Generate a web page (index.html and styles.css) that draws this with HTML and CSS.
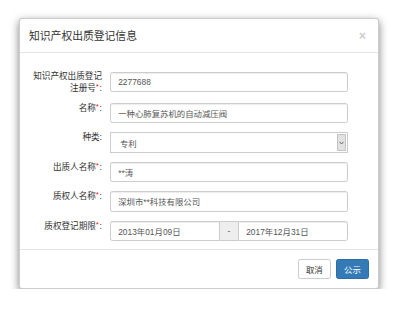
FILE: index.html
```html
<!DOCTYPE html>
<html lang="zh-CN">
<head>
    <meta charset="UTF-8">
    <meta name="viewport" content="width=device-width, initial-scale=1.0">
    <title>知识产权出质登记信息</title>
    <link rel="stylesheet" href="styles.css">
</head>
<body>
    <div class="modal">
        <div class="modal-header">
            <h4 class="modal-title">知识产权出质登记信息</h4>
            <span class="close">&times;</span>
        </div>

        <div class="modal-body">
            <div class="form-row tall">
                <label class="form-label">知识产权出质登记注册号<em>*</em>:</label>
                <div class="field">
                    <input class="input" type="text" value="2277688">
                </div>
            </div>
            <div class="form-row">
                <label class="form-label">名称<em>*</em>:</label>
                <div class="field">
                    <input class="input" type="text" value="一种心肺复苏机的自动减压阀">
                </div>
            </div>
            <div class="form-row">
                <label class="form-label">种类:</label>
                <div class="field">
                    <div class="input select">
                        <span class="select-text">专利</span>
                        <span class="select-arrow">
                            <svg width="5" height="4" viewBox="0 0 5 4"><path d="M0.5 0.8 L2.5 3 L4.5 0.8" fill="none" stroke="#666" stroke-width="1"/></svg>
                        </span>
                    </div>
                </div>
            </div>
            <div class="form-row">
                <label class="form-label">出质人名称<em>*</em>:</label>
                <div class="field">
                    <input class="input" type="text" value="**涛">
                </div>
            </div>
            <div class="form-row">
                <label class="form-label">质权人名称<em>*</em>:</label>
                <div class="field">
                    <input class="input" type="text" value="深圳市**科技有限公司">
                </div>
            </div>
            <div class="form-row">
                <label class="form-label">质权登记期限<em>*</em>:</label>
                <div class="field input-group">
                    <input class="input first" type="text" value="2013年01月09日">
                    <span class="addon">-</span>
                    <input class="input last" type="text" value="2017年12月31日">
                </div>
            </div>
        </div>

        <div class="modal-footer">
            <button class="btn">取消</button>
            <button class="btn btn-primary">公示</button>
        </div>
    </div>
</body>
</html>
```

FILE: styles.css
```css
body {
    margin: 0;
    background-color: #fff;
    font-family: "Liberation Sans", "Noto Sans CJK SC", sans-serif;
    color: #333;
}
.modal {
    width: 358px;
    margin: 18px 0 0 19px;
    background-color: #fff;
    border: 1px solid rgba(0, 0, 0, 0.2);
    border-radius: 3px;
    box-shadow: 0 3px 9px rgba(0, 0, 0, 0.5);
}
.modal-header {
    display: flex;
    justify-content: space-between;
    align-items: center;
    padding: 9px 9px 8px 9px;
    border-bottom: 1px solid #e5e5e5;
}
.modal-title {
    margin: 0;
    font-size: 10.8px;
    line-height: 16px;
    font-weight: normal;
    color: #333;
}
.close {
    font-size: 12.6px;
    font-weight: bold;
    line-height: 1;
    color: #000;
    opacity: 0.2;
    margin-right: 3px;
}
.modal-body {
    padding: 17px 9px 8px 9px;
}
.form-row {
    display: flex;
    align-items: flex-start;
    margin-bottom: 9px;
}
.form-row:last-child {
    margin-bottom: 0;
}
.form-row.tall {
    align-items: center;
}
.form-label {
    flex: none;
    width: 73px;
    margin-right: 8px;
    margin-top: -1px;
    text-align: right;
    font-size: 8.6px;
    line-height: 12px;
    font-weight: normal;
    color: #333;
}
.form-row.tall .form-label {
    margin-top: 0;
}
.form-label em {
    font-style: normal;
    font-size: 7px;
    vertical-align: top;
    line-height: 10px;
    margin-right: 1px;
    color: #e00;
}
.field {
    width: 238px;
}
.input {
    display: block;
    width: 100%;
    height: 20.4px;
    box-sizing: border-box;
    margin: 0;
    padding: 0 7.2px;
    border: 1px solid #ccc;
    border-radius: 2.4px;
    background-color: #fff;
    box-shadow: inset 0 1px 1px rgba(0, 0, 0, 0.075);
    font-family: "Liberation Sans", "Noto Sans CJK SC", sans-serif;
    font-size: 8.4px;
    color: #555;
    outline: none;
}
.select {
    display: flex;
    align-items: center;
    padding: 0 0 0 9px;
    border-radius: 0;
    box-shadow: none;
}
.select-text {
    flex: 1;
}
.select-arrow {
    display: flex;
    align-items: center;
    justify-content: center;
    width: 9px;
    height: 17px;
    margin-right: 1px;
    background-color: #e2e2e2;
    border: 1px solid #c4c4c4;
    box-sizing: border-box;
}
.input-group {
    display: flex;
}
.input-group .input {
    flex: 1;
    width: auto;
    min-width: 0;
}
.input-group .first {
    border-radius: 2.4px 0 0 2.4px;
}
.input-group .last {
    border-radius: 0 2.4px 2.4px 0;
}
.addon {
    flex: none;
    width: 18px;
    height: 20.4px;
    box-sizing: border-box;
    border-top: 1px solid #ccc;
    border-bottom: 1px solid #ccc;
    background-color: #eee;
    color: #555;
    font-size: 8.4px;
    line-height: 18.4px;
    text-align: center;
}
.modal-footer {
    display: flex;
    justify-content: flex-end;
    gap: 5px;
    padding: 9px;
    border-top: 1px solid #e5e5e5;
}
.btn {
    height: 20.4px;
    padding: 0 7.2px;
    border: 1px solid #ccc;
    border-radius: 2.4px;
    background-color: #fff;
    color: #333;
    font-family: "Liberation Sans", "Noto Sans CJK SC", sans-serif;
    font-size: 8.4px;
}
.btn-primary {
    background-color: #337ab7;
    border-color: #2e6da4;
    color: #fff;
}
```
